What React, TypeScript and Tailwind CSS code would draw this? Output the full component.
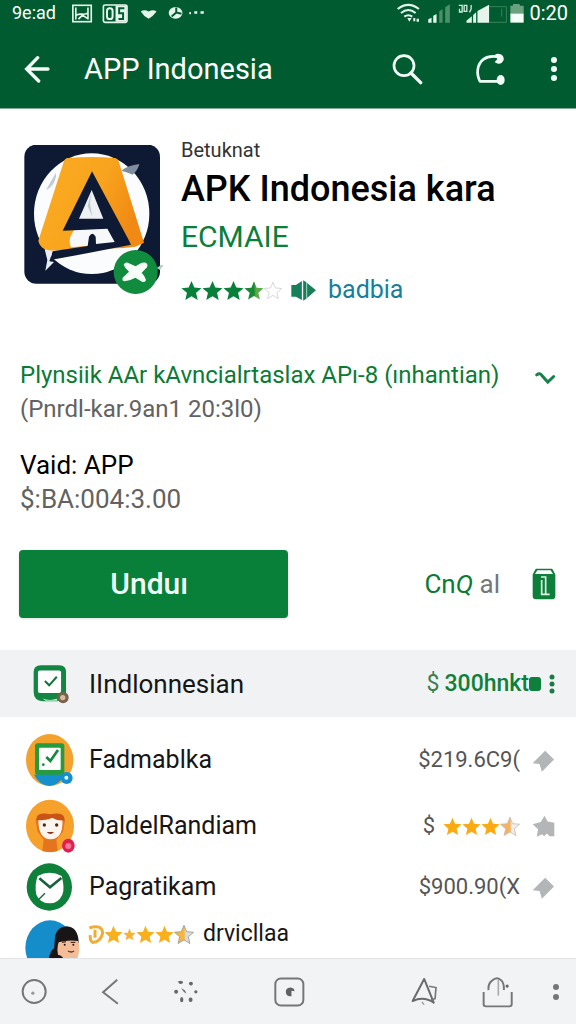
import React from "react";

const STAR = "M12 1l3.2 7.6 8.3.7-6.3 5.4 1.9 8.1L12 18.500l-7.100 4.300 1.900-8.100L.5 9.300l8.300-.7z";

function Star({ fill, stroke = "none", className = "w-[21px] h-[21px]" }: { fill: string; stroke?: string; className?: string }) {
  return (
    <svg viewBox="0 0 24 24" className={className} aria-hidden="true">
      <path d={STAR} fill={fill} stroke={stroke} strokeWidth="1" />
    </svg>
  );
}

function HalfStar({ id, from, to, stroke }: { id: string; from: string; to: string; stroke: string }) {
  return (
    <svg viewBox="0 0 24 24" className="w-[20px] h-[21px]" aria-hidden="true">
      <defs>
        <linearGradient id={id}>
          <stop offset="0.5" stopColor={from} />
          <stop offset="0.6" stopColor={to} />
        </linearGradient>
      </defs>
      <path d={STAR} fill={`url(#${id})`} stroke={stroke} strokeWidth="1" />
    </svg>
  );
}

function StatusBar() {
  return (
    <div className="flex h-[26px] items-center justify-between pl-3 pr-2 text-white">
      <div className="flex items-center">
        <span className="w-[58px] text-[18px] leading-5">9e:ad</span>
        <svg viewBox="208 6 410 64" className="h-[21px] w-[137px]" aria-hidden="true">
          <rect x="213" y="13" width="56" height="50" fill="none" stroke="#e6f5ec" strokeWidth="5" />
          <path d="M222 20v36M259 20v36M224 43c12-8 22 2 33-6M230 55l12-12 15 10" fill="none" stroke="#e6f5ec" strokeWidth="5" />
          <rect x="306" y="12" width="72" height="53" rx="5" fill="none" stroke="#e6f5ec" strokeWidth="5" />
          <rect x="343" y="14" width="34" height="49" fill="#e6f5ec" />
          <rect x="317" y="22" width="17" height="33" rx="8" fill="none" stroke="#e6f5ec" strokeWidth="6" />
          <path d="M370 22h-16v15h12v18h-14" fill="none" stroke="#005c30" strokeWidth="6" />
          <path d="M420 32q10-8 24 0q14-8 24 0q-10 14-24 22q-16-8-24-22z" fill="#e6f5ec" />
          <ellipse cx="526" cy="36" rx="21" ry="18" fill="#e6f5ec" />
          <path d="M528 20v15l16 4M528 35l-14 12" fill="none" stroke="#005c30" strokeWidth="6" />
          <path d="M568 37h5M583 35h9M602 35h10" stroke="#e6f5ec" strokeWidth="7" />
        </svg>
      </div>
      <div className="flex items-center gap-1">
        <svg viewBox="300 4 388 66" className="h-[22px] w-[129px]" aria-hidden="true">
          <g fill="none" stroke="#e6f5ec" strokeWidth="6">
            <path d="M305 25q32-25 64 0M315 37q22-18 44 0M325 48q12-9 24 0" />
          </g>
          <path d="M334 52h13l-7 11zM352 52h6v10h-6zM362 54h7v9h-7z" fill="#e6f5ec" />
          <path d="M397 66v-10l10-5v15zM412 66v-21l10-5v26z" fill="#e6f5ec" />
          <path d="M430 66v-34l10-6v40zM448 66v-46l14-9v55z" fill="#4c9069" />
          <path d="M489 14h10v20h-8v-10M505 14h8v18h-8zM526 13v12l-5 10" fill="none" stroke="#cfe9da" strokeWidth="4" />
          <path d="M512 66v-6l16-13v19zM532 66v-23l9-8v31zM545 66v-35l35-19v54z" fill="#e6f5ec" />
          <path d="M580 18h52v47h-52M618 24v24" fill="none" stroke="#37835a" strokeWidth="3" />
          <path d="M644 15h8v-5h20v5h12v25h-40z" fill="#6aa27f" />
          <path d="M644 39h40v27h-40z" fill="#f5fffa" />
        </svg>
        <span className="text-[20px] leading-5">0:20</span>
      </div>
    </div>
  );
}

function AppBar() {
  return (
    <div className="flex h-[82px] items-center pt-1 text-white">
      <button type="button" aria-label="Back" className="ml-6 flex h-10 w-[60px] items-center">
        <svg viewBox="70 162 78 84" className="h-[28px] w-[26px]" aria-hidden="true">
          <path d="M111 170L78 204l36 36M79 204h63" fill="none" stroke="#f2fff8" strokeWidth="10" strokeLinecap="round" />
        </svg>
      </button>
      <h1 className="flex-1 text-[29px] leading-9">APP Indonesia</h1>
      <button type="button" aria-label="Search" className="mr-[52px]">
        <svg viewBox="311 160 93 93" className="h-[31px] w-[31px]" aria-hidden="true">
          <circle cx="347" cy="195" r="30" fill="none" stroke="#f2fff8" strokeWidth="8" />
          <path d="M368 217l29 29" stroke="#f2fff8" strokeWidth="10" strokeLinecap="round" />
        </svg>
      </button>
      <button type="button" aria-label="Refresh" className="mr-[44px]">
        <svg viewBox="563 158 93 99" className="h-[33px] w-[31px]" aria-hidden="true">
          <path d="M630 169q-26-4-42 8c-19 15-22 43-10 66h56" fill="none" stroke="#f2fff8" strokeWidth="8" strokeLinecap="round" strokeLinejoin="round" />
          <path d="M622 164q8-6 18-2q11 6 9 17q-5 12-16 11q-8-1-11-5l8-8z" fill="#f2fff8" />
          <ellipse cx="640" cy="239" rx="12" ry="15" fill="#f2fff8" />
        </svg>
      </button>
      <button type="button" aria-label="More options" className="mr-[18px]">
        <svg viewBox="0 0 8 26" className="h-[26px] w-2" fill="#f2fff8" aria-hidden="true">
          <circle cx="4" cy="4" r="3" /><circle cx="4" cy="13" r="3" /><circle cx="4" cy="22" r="3" />
        </svg>
      </button>
    </div>
  );
}

function AppLogo() {
  return (
    <svg viewBox="72 45 420 450" className="h-[150px] w-[140px] shrink-0" role="img" aria-label="APK Indonesia">
      <defs>
        <linearGradient id="letter" x1="0" y1="0" x2="1" y2="0.4">
          <stop offset="0" stopColor="#f9ad22" />
          <stop offset="0.6" stopColor="#f9a41e" />
          <stop offset="1" stopColor="#f08a14" />
        </linearGradient>
      </defs>
      <rect x="73" y="44" width="407" height="417" rx="36" fill="#0e1a33" />
      <ellipse cx="275" cy="251" rx="173" ry="181" fill="#fbfcfd" />
      <path d="M364 122q20-16 54-20q-4 18-20 32q-12-6-34-12z" fill="#7f8da0" />
      <path d="M168 128l-30 52q22-8 30-40z" fill="#c3ccd4" />
      <path d="M204 84q76-6 138 0q10 0 14 10l76 244-26 12-36 4-225 8q-26-8-30-30l76-236q4-12 13-12z" fill="url(#letter)" />
      <path d="M212 318l10-18 104-6 22 46-135 12q-8-20-1-34z" fill="#f6f8fa" />
      <path d="M276 124L188 302l134-6 22 40-56 6-1-22q-10-18-20 0l-4 28-106 16-6 26 110-20 132-26-8-16z" fill="#0e1a33" />
      <path d="M275 180l-38 86h73z" fill="#eef1f3" />
      <path d="M275 184l-12 44 14 32-7-40z" fill="#bfcad1" />
      <path d="M134 358l24 6-10 30 14 2-26 26 6-32z" fill="#e9eef4" />
      <path d="M470 414l14-10 6 2-10 14z" fill="#b5cdb7" />
      <circle cx="407" cy="426" r="66" fill="#118b3e" />
      <path d="M371 404q4-8 12-6l24 11q18-14 30-11q8 4 4 14l-16 16q10 10 13 22q-2 8-12 5l-20-12q-18 10-32 11q-9-2-6-11l19-18q-12-10-16-21z" fill="#f6fff8" />
    </svg>
  );
}

function Cursor() {
  return (
    <svg viewBox="395 66 70 70" className="h-[23px] w-[23px]" aria-hidden="true">
      <path d="M435 71l27 27-37 37-7-23-21-3z" fill="#b3b5b6" />
    </svg>
  );
}

function CheckAvatar() {
  return (
    <svg viewBox="75 25 150 162" className="h-[54px] w-[50px]" aria-hidden="true">
      <ellipse cx="149" cy="106" rx="71" ry="78" fill="#f2a22d" />
      <path d="M102 150q45-10 94 0-20 32-48 34-30-3-46-34z" fill="#168fcf" />
      <rect x="105" y="56" width="88" height="94" rx="8" fill="#269b3e" />
      <rect x="117" y="69" width="65" height="67" rx="3" fill="#fff" />
      <path d="M139 97l12 12 23-33" fill="none" stroke="#13883c" strokeWidth="8" />
      <circle cx="130" cy="120" r="4" fill="#13883c" />
      <circle cx="200" cy="160" r="18" fill="#168fcf" />
      <circle cx="199" cy="159" r="6" fill="#e4f5fd" />
    </svg>
  );
}

function FaceAvatar() {
  return (
    <svg viewBox="75 224 150 162" className="h-[54px] w-[50px]" aria-hidden="true">
      <ellipse cx="150" cy="305" rx="72" ry="79" fill="#f6a12b" />
      <path d="M107 290q0-24 44-20q44-4 44 20l-6 32-20 24 4 34q-22 6-46 0l4-34-18-24z" fill="#e5741f" />
      <path d="M115 285q34 2 40-6q12 8 32 6 4 60-36 60-36 0-36-60z" fill="#fff5ed" />
      <path d="M109 288q-2-28 42-18q44-10 43 18-22 2-38-8-16 8-47 8z" fill="#c95317" />
      <circle cx="133" cy="302" r="5" fill="#4a2a20" /><circle cx="170" cy="302" r="5" fill="#4a2a20" />
      <path d="M140 323h22q-10 12-22 0z" fill="#8e3026" />
      <ellipse cx="205" cy="364" rx="19" ry="21" fill="#df1f50" />
      <circle cx="205" cy="365" r="9" fill="#f2779a" />
    </svg>
  );
}

function ClockAvatar() {
  return (
    <svg viewBox="76 417 144 144" className="h-[48px] w-[48px]" aria-hidden="true">
      <ellipse cx="149" cy="489" rx="68" ry="71" fill="#0e8039" />
      <path d="M114 456q36-20 72 0 10 38 2 56-12 26-38 26-28 0-40-26-6-28 4-56z" fill="#fff" />
      <path d="M119 463l32 27 34-28" fill="none" stroke="#17633a" strokeWidth="8" />
      <path d="M116 527l20-19" stroke="#17633a" strokeWidth="4" />
    </svg>
  );
}

function PersonAvatar() {
  return (
    <svg viewBox="75 587 165 165" className="h-[55px] w-[55px]" aria-hidden="true">
      <ellipse cx="150" cy="670" rx="74" ry="82" fill="#158dca" />
      <path d="M164 652q0-44 36-46 34 2 36 48l-4 10-8-10-42 2-10 46h-24q2-22 14-30z" fill="#171515" />
      <path d="M176 654q28-8 58-4 8 20 0 46l-10 30h-34l-16-34q-4-24 2-38z" fill="#f3bd97" />
      <path d="M186 654l12-2M212 654h14M204 680q10 6 18 0" stroke="#57302a" strokeWidth="4" fill="none" />
      <circle cx="194" cy="661" r="3" fill="#231815" /><circle cx="220" cy="661" r="3" fill="#231815" />
      <path d="M148 692q40-6 44 16v28h-44z" fill="#171515" />
    </svg>
  );
}

function Row({ avatar, name, children, className }: { avatar: React.ReactNode; name: string; children: React.ReactNode; className: string }) {
  return (
    <li className={`flex items-center pl-[25px] pr-[21px] ${className}`}>
      <div className="w-16 shrink-0">{avatar}</div>
      <span className="flex-1 text-[25px] leading-8 text-[#161616]">{name}</span>
      <div className="flex items-center gap-3 text-[22px] leading-8 text-[#555]">{children}</div>
    </li>
  );
}

const navButton = "flex h-10 w-10 items-center justify-center";

function BottomNav() {
  return (
    <nav className="flex h-[66px] shrink-0 items-center justify-between border-t border-[#e2e3e4] bg-[#f2f3f4] pl-[14px]">
      <div className="flex gap-[36px]">
        <button type="button" aria-label="Home" className={navButton}>
          <svg viewBox="64 86 80 82" className="h-[27px] w-[27px]" aria-hidden="true">
            <circle cx="103" cy="127" r="35" fill="none" stroke="#747677" strokeWidth="6" />
            <circle cx="99" cy="132" r="5" fill="#999" />
          </svg>
        </button>
        <button type="button" aria-label="Back" className={navButton}>
          <svg viewBox="312 86 54 82" className="h-[27px] w-[18px]" aria-hidden="true">
            <path d="M361 91l-43 38 45 35" fill="none" stroke="#747677" strokeWidth="6" />
          </svg>
        </button>
        <button type="button" aria-label="Loading" className={navButton}>
          <svg viewBox="514 86 78 76" className="h-[25px] w-[26px]" fill="#66696a" aria-hidden="true">
            <ellipse cx="537" cy="96" rx="7" ry="5" /><circle cx="568" cy="100" r="6" /><circle cx="583" cy="125" r="5" />
            <ellipse cx="567" cy="149" rx="6" ry="7" /><ellipse cx="540" cy="149" rx="5" ry="8" /><circle cx="523" cy="125" r="6" />
            <path d="M526 92l10 2v5M538 113l12 8 4 10-8-6z" />
          </svg>
        </button>
      </div>
      <button type="button" aria-label="Recent apps" className={navButton}>
        <svg viewBox="820 80 94 90" className="h-[30px] w-[31px]" aria-hidden="true">
          <rect x="824" y="84" width="85" height="82" rx="17" fill="none" stroke="#747677" strokeWidth="6" />
          <path d="M856 126q-2-14 14-15 13 2 12 12l-9-2v17q-16 2-17-12z" fill="#5f6263" />
        </svg>
      </button>
      <div className="ml-8 flex gap-[26px]">
        <button type="button" aria-label="Navigate" className={navButton}>
          <svg viewBox="120 82 80 88" className="h-[29px] w-[27px]" aria-hidden="true">
            <path d="M159 88l-35 67q34-16 64 5z" fill="none" stroke="#696c6d" strokeWidth="6" strokeLinejoin="round" />
            <path d="M174 110l21 4-3 34-12 4" fill="none" stroke="#747677" strokeWidth="5" />
            <path d="M152 158l7 8" stroke="#999" strokeWidth="4" />
          </svg>
        </button>
        <button type="button" aria-label="Share" className={`${navButton} ml-2`}>
          <svg viewBox="334 84 98 98" className="h-[32px] w-[32px]" aria-hidden="true">
            <path d="M339 133v37q0 7 7 7h72q7 0 7-7v-37M354 127q-2-20 11-29 15-14 29 0 8 9 7 29" fill="none" stroke="#747677" strokeWidth="6" />
            <path d="M384 96v48" stroke="#aaa" strokeWidth="5" />
            <circle cx="411" cy="115" r="5" fill="#66696a" />
          </svg>
        </button>
        <button type="button" aria-label="More" className={`${navButton} -ml-2`}>
          <svg viewBox="0 0 6 18" className="h-[18px] w-1.5" fill="#747677" aria-hidden="true">
            <circle cx="3" cy="4" r="3" /><circle cx="3" cy="14" r="3" />
          </svg>
        </button>
      </div>
    </nav>
  );
}

export default function App() {
  return (
    <div className="flex h-screen flex-col bg-white font-['Roboto',sans-serif] text-black">
      <header className="shrink-0 border-b border-[#7fae94] bg-[#005c30]">
        <StatusBar />
        <AppBar />
      </header>

      <main className="min-h-0 flex-1 overflow-y-auto [scrollbar-width:none]">
        <section className="flex gap-[17px] pl-6 pt-9">
          <AppLogo />
          <div className="-mt-[7px] min-w-0">
            <p className="text-[20px] leading-6 text-[#333]">Betuknat</p>
            <h2 className="whitespace-nowrap text-[36px] font-medium leading-[54px]">APK Indonesia kara</h2>
            <p className="text-[30px] leading-[42px] text-[#08803a]">ECMAIE</p>
            <div className="mt-[10px] flex h-11 items-center">
              <div className="flex" role="img" aria-label="4 stars">
                <Star fill="#08803a" /><Star fill="#08803a" /><Star fill="#08803a" />
                <HalfStar id="rating-part" from="#178a35" to="#5eaa4b" stroke="none" />
                <Star fill="#fff" stroke="#c9ccca" className="w-[18px] h-[21px]" />
              </div>
              <svg viewBox="364 444 82 70" className="ml-2 h-[23px] w-[27px]" aria-hidden="true">
                <path d="M368 462h14l18-12v58l-18-10h-14z" fill="#17805a" />
                <path d="M404 448l10 6v50l-10 6zM416 456l27 22-27 24z" fill="#17805a" />
              </svg>
              <a href="#badbia" className="ml-[11px] text-[25px] leading-8 text-[#177f9e]">badbia</a>
            </div>
          </div>
        </section>

        <section className="mt-[46px] px-5">
          <div className="flex items-center justify-between">
            <h3 className="whitespace-nowrap text-[24px] leading-[34px] text-[#0b7b33]">Plynsiik AAr kAvncialrtaslax APı-8 (ınhantian)</h3>
            <button type="button" aria-label="Expand">
              <svg viewBox="744 94 62 46" className="mt-1 h-[15px] w-[21px]" aria-hidden="true">
                <path d="M748 109q10-8 16 2l18 20 18-17" fill="none" stroke="#188049" strokeWidth="9" strokeLinecap="round" />
              </svg>
            </button>
          </div>
          <p className="text-[24px] leading-[34px] text-[#626262]">(Pnrdl-kar.9an1 20:3l0)</p>
          <p className="mt-[22px] text-[26px] leading-[34px]">Vaid: APP</p>
          <p className="text-[26px] leading-[34px] text-[#626262]">$:BA:004:3.00</p>
        </section>

        <section className="mt-[34px] flex items-center justify-between pl-[19px] pr-5">
          <button type="button" className="h-[68px] w-1/2 max-w-[270px] rounded-[4px] bg-[#08803a] pr-2 text-[30px] font-medium leading-9 text-[#f2fff6] shadow">Unduı</button>
          <div className="flex items-center">
            <span className="text-[26px] leading-8 text-[#0b7b33]">Cn<i>Q</i> <span className="text-[#777]">al</span></span>
            <button type="button" aria-label="Package" className="ml-8">
              <svg viewBox="397 80 72 96" className="h-[32px] w-[24px]" aria-hidden="true">
                <path d="M402 100l8-15h46l8 15v64q0 7-7 7h-48q-7 0-7-7z" fill="#0e7f3b" stroke="#0e7f3b" strokeWidth="6" strokeLinejoin="round" />
                <path d="M413 87h40l7 11h-54z" fill="#fff" />
                <path d="M424 107h16M438 106v52M426 116v43h24" fill="none" stroke="#dff3e5" strokeWidth="5" />
              </svg>
            </button>
          </div>
        </section>

        <section className="mt-8 flex h-[67px] items-center bg-[#f1f2f3] pl-[33px] pr-[21px]">
          <svg viewBox="100 378 112 120" className="h-[40px] w-[37px]" aria-hidden="true">
            <path d="M124 381h56q20 0 20 20v62q0 27-28 27h-42q-28-2-28-28v-60q0-21 22-21z" fill="#118541" />
            <rect x="115" y="397" width="70" height="68" rx="6" fill="#fff" />
            <path d="M136 429l13 13 23-26" fill="none" stroke="#12733a" strokeWidth="6" />
            <path d="M128 482q22 8 44 1l2 6h-36z" fill="#bff0cb" />
            <circle cx="191" cy="479" r="17" fill="#79634d" /><circle cx="190" cy="479" r="8" fill="#d9b9a2" />
          </svg>
          <span className="ml-[19px] flex-1 text-[26px] leading-8 text-[#161616]">IIndlonnesian</span>
          <span className="text-[23px] leading-8 text-[#397f58]">$</span>
          <span className="ml-[5px] text-[23px] font-medium leading-8 text-[#0e803c]">300hnkt</span>
          <span className="h-[14px] w-3 rounded-[3px] bg-[#0e803c]" />
          <button type="button" aria-label="Item options" className="ml-2">
            <svg viewBox="0 0 6 20" className="h-5 w-1.5" fill="#1c7a45" aria-hidden="true">
              <circle cx="3" cy="3" r="2.500" /><circle cx="3" cy="10" r="2.500" /><circle cx="3" cy="17" r="2.500" />
            </svg>
          </button>
        </section>

        <ul className="pt-[10px]">
          <Row className="h-[66px]" avatar={<CheckAvatar />} name="Fadmablka">
            <span>$219.6C9(</span><Cursor />
          </Row>
          <Row className="h-[66px]" avatar={<FaceAvatar />} name="DaldelRandiam">
            <div className="flex items-center">
              <span className="mr-2">$</span>
              <Star fill="#fbab12" className="h-[21px] w-[19px]" />
              <Star fill="#fbab12" className="h-[21px] w-[19px]" />
              <Star fill="#fbab12" className="h-[21px] w-[19px]" />
              <HalfStar id="item-half" from="#f6b261" to="#f2efee" stroke="#c9b9b0" />
            </div>
            <svg viewBox="394 262 68 68" className="h-[23px] w-[23px]" aria-hidden="true">
              <path d="M431 264l9 17 20 4v40h-14l-8-8-8 8-6-6-16 7 4-22-16-15 24-6z" fill="#b3b5b6" />
            </svg>
          </Row>
          <Row className="h-[56px]" avatar={<ClockAvatar />} name="Pagratikam">
            <span>$900.90(X</span><Cursor />
          </Row>
          <li className="flex items-start pl-[25px] pt-[5px]">
            <div className="w-[63px] shrink-0"><PersonAvatar /></div>
            <div className="flex h-7 items-center">
              <svg viewBox="264 594 48 56" className="h-[19px] w-4" aria-hidden="true">
                <path d="M268 602q38-12 40 16-6 26-29 28-10-4-8-22M285 608v24" fill="none" stroke="#f0ac38" strokeWidth="9" />
              </svg>
              <Star fill="#fab01c" className="h-[21px] w-[19px]" />
              <Star fill="#f5b233" className="h-[17px] w-[13px]" />
              <Star fill="#fab01c" className="h-[21px] w-[19px]" />
              <Star fill="#fab01c" className="h-[21px] w-[19px]" />
              <HalfStar id="last-half" from="#f9b63d" to="#dcdcda" stroke="#999" />
              <span className="ml-[9px] text-[23px] leading-7 text-[#161616]">drvicllaa</span>
            </div>
          </li>
        </ul>
      </main>

      <BottomNav />
    </div>
  );
}
